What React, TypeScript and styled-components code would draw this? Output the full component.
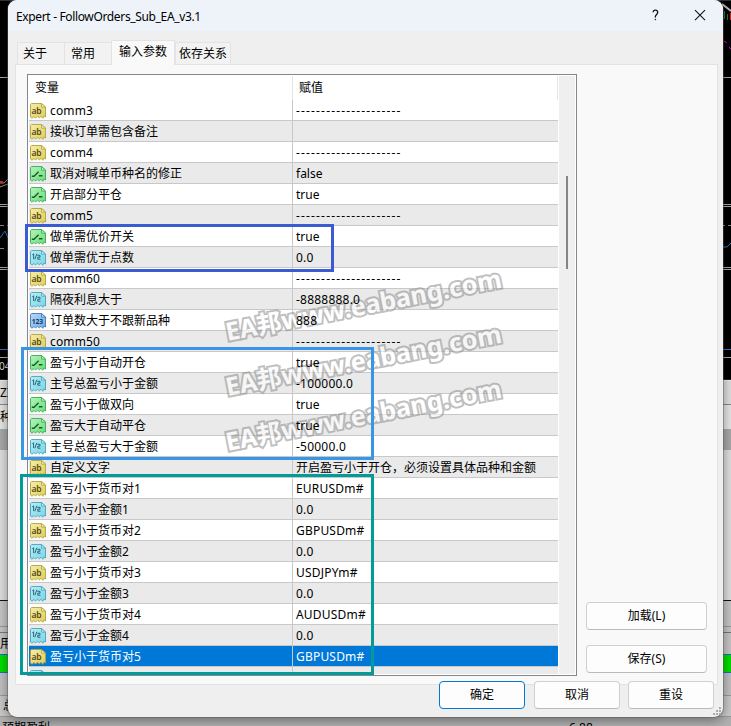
import React from "react";
import styled, { createGlobalStyle, css } from "styled-components";

const Global = createGlobalStyle`
  *{box-sizing:border-box}
  body{margin:0;overflow:hidden;font:12px "Noto Sans","Noto Sans CJK SC",sans-serif;color:#000}
  button{font:inherit;color:inherit;padding:0}
`;

const Desktop = styled.div`width:731px;height:726px;position:relative;overflow:hidden;background:#b0b0b0;`;
const Backdrop = styled.div`position:absolute;inset:0;display:flex;flex-direction:column;line-height:1;`;
const Chart = styled.svg`display:block;flex:none;background:#000;`;
const Band = styled.div<{ $h: number; $bg: string; $line?: string }>`
  flex:none;height:${p => p.$h}px;background:${p => p.$bg};overflow:hidden;white-space:nowrap;
  display:flex;align-items:center;border-bottom:${p => (p.$line ? `1px solid ${p.$line}` : "0")};
`;
const Bottom = styled(Band)`align-items:flex-start;padding:5px 0 0 2px;`;
const Amount = styled.span`margin-left:519px;`;

const Dialog = styled.main`
  position:relative;width:715px;height:717px;margin-left:8px;border-radius:9px;
  background:#efefef;box-shadow:0 0 0 1px rgba(90,90,90,.45),0 3px 12px rgba(0,0,0,.42);
  display:flex;flex-direction:column;overflow:hidden;
`;
const TitleBar = styled.header`height:31px;flex:none;background:#eef3f9;display:flex;align-items:center;padding:1px 15px 0 8px;`;
const Title = styled.h1`margin:0;font-size:12px;font-weight:400;letter-spacing:-.35px;flex:1;`;
const TitleIcons = styled.svg`display:block;`;
const Tabs = styled.nav`height:33px;flex:none;display:flex;align-items:flex-end;padding-left:9px;position:relative;z-index:1;`;
const Tab = styled.div<{ $w: number; $pad?: number; $active?: boolean }>`
  width:${p => p.$w}px;height:${p => (p.$active ? 25 : 22)}px;border:1px solid #e3e3e3;border-bottom:0;
  background:${p => (p.$active ? "#f9f9f9" : "#f2f2f2")};padding:3px 0 0 ${p => p.$pad ?? 5}px;
  margin-bottom:${p => (p.$active ? -1 : 0)}px;margin-right:${p => (p.$active ? 0 : -1)}px;line-height:16px;white-space:nowrap;
`;
const Page = styled.section`
  width:703px;height:621px;flex:none;margin-left:7px;border:1px solid #e3e3e3;background:#f9f9f9;
  display:flex;padding:9px 0 0 11px;
`;
const Table = styled.div`width:550px;height:602px;flex:none;border:1px solid #828790;background:#fff;padding:1px;display:flex;`;
const Grid = styled.div`width:529px;height:598px;overflow:hidden;`;
const HeadRow = styled.div`display:grid;grid-template-columns:263px 266px;height:24px;line-height:24px;`;
const Head = styled.div`padding-left:6px;border-right:1px solid #e5e5e5;&:first-child{border-right:0}& + &{border-left:1px solid #e5e5e5}`;
const Row = styled.div<{ $alt: boolean; $sel: boolean }>`
  display:grid;grid-template-columns:263px 266px;height:21px;border-bottom:1px solid #c8c8c8;
  background:${p => (p.$sel ? "#0078d7" : p.$alt ? "#eaeaea" : "#fff")};
  ${p => p.$sel && css`color:#fff;`}
`;
const Name = styled.div`display:flex;align-items:center;height:20px;padding-left:1px;gap:4px;white-space:nowrap;`;
const Label = styled.span<{ $latin: boolean }>`
  letter-spacing:${p => (p.$latin ? ".15px" : "0")};position:relative;z-index:2;line-height:20px;padding-top:2px;
`;
const Value = styled.div<{ $spacing: number }>`
  border-left:1px solid #c8c8c8;height:20px;padding-left:3px;line-height:22px;white-space:nowrap;
  letter-spacing:${p => p.$spacing}px;
  span{position:relative;z-index:2}
`;
const Scrollbar = styled.div`width:16px;height:598px;margin-left:1px;background:#efefef;padding:100px 0 0 7px;`;
const Thumb = styled.div`width:2px;height:93px;background:#858585;`;
const Side = styled.aside`padding:528px 0 0 9px;display:flex;flex-direction:column;gap:15px;`;
const Button = styled.button<{ $w: number; $primary?: boolean }>`
  width:${p => p.$w}px;height:28px;flex:none;border-radius:4px;background:#fdfdfd;line-height:24px;
  border:1px solid ${p => (p.$primary ? "#0078d4" : "#d0d0d0")};
  ${p => (p.$primary ? css`margin-right:1px;` : css`border-bottom-color:#bbb;`)}
`;
const Footer = styled.footer`display:flex;margin-top:-4px;padding-left:431px;gap:8px;position:relative;`;
const Grip = styled.svg`position:absolute;right:2px;bottom:-6px;`;

const Mark = styled.div<{ $y: number }>`
  position:absolute;z-index:1;left:215px;top:${p => p.$y}px;width:284px;height:36px;line-height:36px;
  font-size:25.2px;font-weight:700;white-space:nowrap;transform:rotate(-11deg);color:#fff;
  -webkit-text-stroke:4px #949494;paint-order:stroke fill;letter-spacing:-.05px;opacity:.58;pointer-events:none;
`;
const Outline = styled.div<{ $x: number; $y: number; $w: number; $h: number; $c: string }>`
  position:absolute;z-index:1;left:${p => p.$x}px;top:${p => p.$y}px;width:${p => p.$w}px;height:${p => p.$h}px;
  border:3px solid ${p => p.$c};pointer-events:none;
`;

type Kind = "ab" | "bool" | "half" | "int";
const palette: Record<Kind, [string, string, string, string]> = {
  ab: ["#f5edaa", "#dfcf55", "#b3a13c", "#54481a"],
  bool: ["#b4f3b9", "#69dc7b", "#3ba954", "#126026"],
  half: ["#b9edf5", "#79d4e6", "#45a5bc", "#155c70"],
  int: ["#b5d9f7", "#6fabe3", "#3f78b5", "#123d70"],
};
const TypeIconSvg = styled.svg`display:block;flex:none;font:600 8.5px "Noto Sans",sans-serif;margin-top:2px;`;
const Digits = styled.text`font-size:7.5px;font-weight:700;`;
function TypeIcon({ kind }: { kind: Kind }) {
  const [light, fill, edge, ink] = palette[kind];
  const id = "paper-" + kind;
  return (
    <TypeIconSvg width="16" height="16" viewBox="0 0 16 16">
      <defs><linearGradient id={id} x1="0" y1="0" x2="1" y2="1"><stop stopColor={light} /><stop offset="1" stopColor={fill} /></linearGradient></defs>
      <path d="M.5 1.5 1.5.5H11.5L15.5 4V14L14 13 12.8 15.3 11 13.3 9.3 14.8 7.5 13.3 5.5 15 4 13.5 2 15.2.5 14Z" fill={`url(#${id})`} stroke={edge} strokeWidth=".9" />
      <path d="M11.5.5V4.2H15.5Z" fill={light} stroke={edge} strokeWidth=".8" />
      {kind === "ab" && <text x="1.6" y="11" fill={ink} textLength="10">ab</text>}
      {kind === "int" && <Digits x="1.7" y="11" fill={ink} textLength="11.5" lengthAdjust="spacingAndGlyphs">123</Digits>}
      {kind === "half" && <path d="M2.3 4.8 3.6 3.8V9M6.8 3.8 4.8 9.3M7.3 5.3H10V7.2H7.8V9.2H10.5" fill="none" stroke={ink} strokeWidth=".9" />}
      {kind === "bool" && <path d="M1.8 10.3H4L8.6 5.8M8.8 9.8H12.4" fill="none" stroke={ink} strokeWidth="1.4" />}
    </TypeIconSvg>
  );
}

const dash = "---------------------";
const rows: [Kind, string, string][] = [
  ["ab", "comm3", dash], ["ab", "接收订单需包含备注", ""], ["ab", "comm4", dash],
  ["bool", "取消对喊单币种名的修正", "false"], ["bool", "开启部分平仓", "true"], ["ab", "comm5", dash],
  ["bool", "做单需优价开关", "true"], ["half", "做单需优于点数", "0.0"], ["ab", "comm60", dash],
  ["half", "隔夜利息大于", "-8888888.0"], ["int", "订单数大于不跟新品种", "888"], ["ab", "comm50", dash],
  ["bool", "盈亏小于自动开仓", "true"], ["half", "主号总盈亏小于金额", "-100000.0"], ["bool", "盈亏小于做双向", "true"],
  ["bool", "盈亏大于自动平仓", "true"], ["half", "主号总盈亏大于金额", "-50000.0"],
  ["ab", "自定义文字", "开启盈亏小于开仓，必须设置具体品种和金额"],
  ["ab", "盈亏小于货币对1", "EURUSDm#"], ["half", "盈亏小于金额1", "0.0"],
  ["ab", "盈亏小于货币对2", "GBPUSDm#"], ["half", "盈亏小于金额2", "0.0"],
  ["ab", "盈亏小于货币对3", "USDJPYm#"], ["half", "盈亏小于金额3", "0.0"],
  ["ab", "盈亏小于货币对4", "AUDUSDm#"], ["half", "盈亏小于金额4", "0.0"],
  ["ab", "盈亏小于货币对5", "GBPUSDm#"], ["half", "", ""],
];
function spacingOf(value: string) {
  if (value === dash) return 1.16;
  if (/^-?\d/.test(value)) return 0.22;
  if (/^[A-Z]/.test(value)) return 0.2;
  return 0;
}

export default function App() {
  return (
    <Desktop>
      <Global />
      <Backdrop>
        <Chart width="731" height="379">
          <path d="M0 .5H731" stroke="#333" />
          <path d="M0 77.5H731M0 204.5H731M0 206.5H731M0 267.5H731M0 269.5H731M0 357.5H731" stroke="#aaa" />
          <path d="M0 225.5H731M0 248.5H7" stroke="#888" strokeDasharray="4 3" />
          <path d="M0 349.5H731M0 238 5 231 8 238M722 247H727L731 243" stroke="#2676c8" fill="none" />
          <path d="M0 183H4L8 179M0 187 8 184" stroke="#a88" fill="none" />
          <path d="M0 182H3M731 13V20" stroke="#d22" strokeWidth="2" />
          <path d="M722 4 731 11" stroke="#bbb" strokeWidth="2" />
          <path d="M724.5 11V19M727.5 14V20" stroke="#198335" />
          <path d="M724 41 727 43M729 47 731 49" stroke="#e0e" />
          <text x="-1" y="370" fill="#ddd" fontSize="10">04</text>
        </Chart>
        <Band $h={2} $bg="#222" $line="#eee" />
        <Band $h={24} $bg="#dedede" $line="#888">ZI</Band>
        <Band $h={24} $bg="#e5e5e5">种</Band>
        <Band $h={21} $bg="#a8a8a8" />
        <Band $h={151} $bg="#dedede" $line="#111" />
        <Band $h={26} $bg="#c5c5c5" $line="#999" />
        <Band $h={6} $bg="#c5c5c5" $line="#777" />
        <Band $h={22} $bg="#c5c5c5" $line="#1670c8">用</Band>
        <Band $h={18} $bg="#00dc00" $line="#1670c8" />
        <Band $h={23} $bg="#c0c0c0" $line="#999" />
        <Band $h={21} $bg="#c8c8c8" $line="#999">&nbsp;总</Band>
        <Bottom $h={10} $bg="#b0b0b0">预期盈利<Amount>6.88</Amount></Bottom>
      </Backdrop>
      <Dialog>
        <TitleBar>
          <Title>Expert - FollowOrders_Sub_EA_v3.1</Title>
          <TitleIcons width="56" height="16" viewBox="0 0 56 16" fill="none" stroke="#111" strokeWidth="1.1">
            <path d="M1.2 4.3Q1.2 2.2 3.4 2.2T5.7 4.3Q5.7 5.5 4.4 6.7T3.3 9.5" strokeWidth="1.3" />
            <circle cx="3.3" cy="11.5" r=".5" fill="#111" strokeWidth=".5" />
            <path d="M43 2.2 53 12.2M53 2.2 43 12.2" />
          </TitleIcons>
        </TitleBar>
        <Tabs>
          <Tab $w={48}>关于</Tab><Tab $w={48} $pad={6}>常用</Tab><Tab $w={64} $pad={7} $active>输入参数</Tab><Tab $w={56} $pad={3}>依存关系</Tab>
        </Tabs>
        <Page>
          <Table>
            <Grid>
              <HeadRow><Head>变量</Head><Head>赋值</Head></HeadRow>
              {rows.map(([kind, name, value], i) => (
                <Row key={i} $alt={i % 2 === 1} $sel={i === 26}>
                  <Name><TypeIcon kind={kind} /><Label $latin={name.startsWith("comm")}>{name}</Label></Name>
                  <Value $spacing={spacingOf(value)}><span>{value}</span></Value>
                </Row>
              ))}
            </Grid>
            <Scrollbar><Thumb /></Scrollbar>
          </Table>
          <Side>
            <Button $w={121}>加载(L)</Button>
            <Button $w={121}>保存(S)</Button>
          </Side>
        </Page>
        <Footer>
          <Button $w={86} $primary>确定</Button><Button $w={86}>取消</Button><Button $w={86}>重设</Button>
          <Grip width="8" height="8" fill="#aaa"><path d="M6 0h2v2H6zM3 3h2v2H3zM6 3h2v2H6zM0 6h2v2H0zM3 6h2v2H3zM6 6h2v2H6z" /></Grip>
        </Footer>
        <Mark $y={286}>EA邦www.eabang.com</Mark>
        <Mark $y={341}>EA邦www.eabang.com</Mark>
        <Mark $y={396}>EA邦www.eabang.com</Mark>
        <Outline $x={17} $y={224} $w={309} $h={48} $c="#3a5bd2" />
        <Outline $x={13} $y={347} $w={353} $h={113} $c="#3996e6" />
        <Outline $x={12} $y={474} $w={354} $h={201} $c="#039b97" />
      </Dialog>
    </Desktop>
  );
}
